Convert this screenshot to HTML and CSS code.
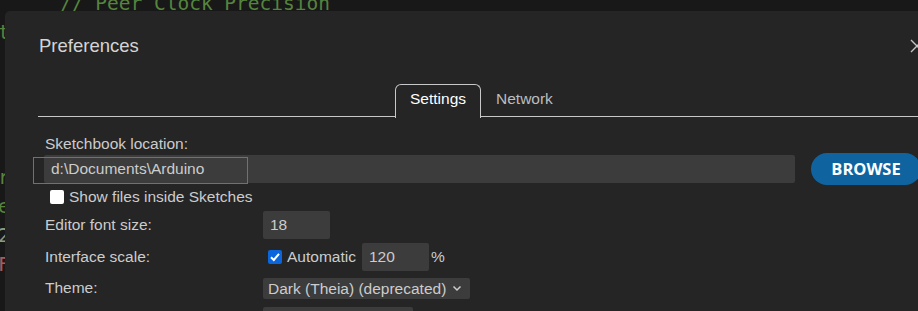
FILE: index.html
```html
<!DOCTYPE html>
<html>
<head>
<meta charset="utf-8">
<link rel="stylesheet" href="styles.css">
</head>
<body>
<div class="editor">
  <div class="line comment first">// Peer Clock Precision</div>
  <div class="line comment">t</div>
  <div class="line"></div>
  <div class="line"></div>
  <div class="line"></div>
  <div class="line"></div>
  <div class="line comment">r</div>
  <div class="line comment">e</div>
  <div class="line number">2</div>
  <div class="line string">F</div>
  <div class="line"></div>
</div>

<div class="dialog">
  <div class="dialog-header">
    <div class="dialog-title">Preferences</div>
    <svg class="close" width="14" height="14" viewBox="0 0 14 14"><path d="M1 1L13 13M13 1L1 13" stroke="#c5c5c5" stroke-width="1.4" fill="none"/></svg>
  </div>
  <div class="tabs">
    <div class="tab active">Settings</div>
    <div class="tab">Network</div>
  </div>
  <div class="content">
    <div class="label-row">Sketchbook location:</div>
    <div class="path-row">
      <div class="input wide">d:\Documents\Arduino</div>
      <div class="browse">BROWSE</div>
      <div class="focus-mark"></div>
    </div>
    <div class="check-row">
      <span class="checkbox"></span>
      <span>Show files inside Sketches</span>
    </div>
    <div class="form-row">
      <div class="label">Editor font size:</div>
      <div class="input small">18</div>
    </div>
    <div class="form-row">
      <div class="label">Interface scale:</div>
      <div class="control">
        <span class="checkbox checked"><svg width="14" height="14" viewBox="0 0 14 14"><path d="M3 7.2L5.8 10L11 3.8" stroke="#fff" stroke-width="2" fill="none"/></svg></span>
        <span class="auto">Automatic</span>
        <div class="input small">120</div>
        <span class="pct">%</span>
      </div>
    </div>
    <div class="form-row theme-row">
      <div class="label">Theme:</div>
      <div class="select">Dark (Theia) (deprecated)<svg width="10" height="8" viewBox="0 0 10 8"><path d="M1.5 2.5L5 6L8.5 2.5" stroke="#cccccc" stroke-width="1.5" fill="none"/></svg></div>
    </div>
    <div class="form-row next-row">
      <div class="label"></div>
      <div class="next-box"></div>
    </div>
  </div>
</div>
</body>
</html>
```
FILE: styles.css
```css
html, body {
  margin: 0;
  padding: 0;
}
body {
  width: 918px;
  height: 311px;
  overflow: hidden;
  position: relative;
  background: #181818;
  font-family: "Liberation Sans", Arial, sans-serif;
}
.editor {
  margin-top: -11px;
  margin-left: -2px;
  font-family: "DejaVu Sans Mono", monospace;
  font-size: 19.5px;
  line-height: 29px;
}
.line { height: 29px; color: #56843f; white-space: pre; }
.line.first { padding-left: 62px; }
.line.number { color: #8a9c80; }
.line.string { color: #a85c5c; }

.dialog {
  position: absolute;
  left: 5px;
  top: 11px;
  width: 960px;
  height: 320px;
  background: #252526;
  border-radius: 5px 5px 0 0;
  color: #cccccc;
}
.dialog-header {
  display: flex;
  justify-content: space-between;
  align-items: center;
  padding: 24px 41px 0 34px;
  height: 22px;
}
.dialog-title {
  font-size: 18.5px;
  line-height: 22px;
  color: #d4d4d4;
}
.close { display: block; }

.tabs {
  margin: 27px 0 0 33px;
  padding-left: 357px;
  display: flex;
  border-bottom: 1px solid #c8c8c8;
  height: 32px;
}
.tab {
  font-size: 15.5px;
  line-height: 18px;
  padding: 5px 14px 0;
  border: 1px solid transparent;
  border-bottom: none;
  color: #bdbdbd;
  height: 27px;
}
.tab.active {
  border-color: #c8c8c8;
  border-radius: 6px 6px 0 0;
  background: #252526;
  color: #ffffff;
  height: 28px;
  margin-bottom: -1px;
}

.content {
  padding: 17px 44px 0 39px;
  font-size: 15.5px;
}
.label-row {
  line-height: 19px;
  height: 19px;
  padding-left: 1px;
}
.path-row {
  position: relative;
  display: flex;
  align-items: center;
  gap: 16px;
  height: 32px;
}
.input {
  background: #3c3c3c;
  border-radius: 2px;
  height: 28px;
  line-height: 28px;
  padding-left: 7px;
  box-sizing: border-box;
  color: #cccccc;
}
.input.wide { flex: 1; }
.input.small { width: 67px; }
.browse {
  width: 110px;
  height: 32px;
  border-radius: 16px;
  background: #0f64a0;
  color: #ffffff;
  font-family: "Open Sans", sans-serif;
  font-weight: 700;
  font-size: 16.5px;
  line-height: 32px;
  text-align: center;
}
.focus-mark {
  position: absolute;
  left: -11px;
  top: 4px;
  width: 213px;
  height: 25px;
  border: 1px solid #d9463f;
}
.check-row {
  display: flex;
  align-items: center;
  gap: 5px;
  padding-left: 6px;
  height: 22px;
  margin-top: 1px;
}
.checkbox {
  display: inline-block;
  width: 14px;
  height: 14px;
  border-radius: 2px;
  background: #ffffff;
  flex: none;
}
.checkbox svg { display: block; }
.checkbox.checked { background: #0b66dc; }
.form-row {
  display: flex;
  align-items: center;
  height: 28px;
  margin-top: 4px;
}
.check-row + .form-row { margin-top: 3px; }
.label {
  width: 219px;
  padding-left: 1px;
  box-sizing: border-box;
  flex: none;
}
.control {
  display: flex;
  align-items: center;
  padding-left: 5px;
}
.auto { margin-left: 5px; margin-right: 6px; }
.pct { margin-left: 2px; }
.theme-row { margin-top: 6px; height: 22px; }
.select {
  background: #3c3c3c;
  border-radius: 2px;
  height: 21px;
  line-height: 21px;
  padding: 0 8px 0 5px;
  display: flex;
  align-items: center;
  gap: 6px;
}
.next-row { margin-top: 8px; }
.next-box {
  width: 150px;
  height: 28px;
  background: #3c3c3c;
  border-radius: 2px;
  align-self: flex-start;
}
```
